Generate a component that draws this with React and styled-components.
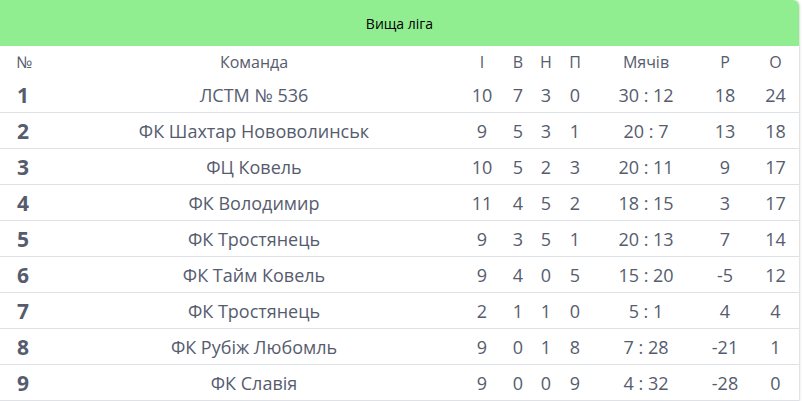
import styled, { createGlobalStyle } from 'styled-components'

const GlobalStyle = createGlobalStyle`
  body {
    margin: 0;
    background: #fff;
    font-family: "Open Sans", "Liberation Sans", sans-serif;
  }
`;

const Card = styled.div`
  width: 799px;
  border-radius: 0 6px 0 0;
  box-shadow: 1px 0 2px rgba(0, 0, 0, 0.15);
  background: #fff;
  overflow: hidden;
`;

const Title = styled.div`
  height: 46px;
  background: #90ee90;
  display: flex;
  align-items: center;
  justify-content: center;
  font-size: 14px;
  font-weight: 500;
  color: #000;
`;

const Table = styled.table`
  width: 799px;
  border-collapse: collapse;
  table-layout: fixed;
  color: #565c6e;
  font-size: 18px;
`;

const HeadCell = styled.th`
  height: 31px;
  padding: 0;
  font-size: 16px;
  font-weight: 400;
  text-align: ${(props) => (props.left ? 'left' : 'center')};
  padding-left: ${(props) => (props.left ? '16px' : '0')};
  vertical-align: middle;
`;

const Row = styled.tr`
  border-bottom: 1px solid #dee2e6;
`;

const Cell = styled.td`
  height: 35px;
  padding: 0;
  text-align: center;
  vertical-align: middle;
  white-space: nowrap;
`;

const RankCell = styled(Cell)`
  text-align: left;
  padding-left: 17px;
  font-size: 21px;
  font-weight: 700;
`;

const widths = [44, 420, 36, 36, 20, 38, 104, 54, 47];

const teams = [
  ['ЛСТМ № 536', 10, 7, 3, 0, '30 : 12', 18, 24],
  ['ФК Шахтар Нововолинськ', 9, 5, 3, 1, '20 : 7', 13, 18],
  ['ФЦ Ковель', 10, 5, 2, 3, '20 : 11', 9, 17],
  ['ФК Володимир', 11, 4, 5, 2, '18 : 15', 3, 17],
  ['ФК Тростянець', 9, 3, 5, 1, '20 : 13', 7, 14],
  ['ФК Тайм Ковель', 9, 4, 0, 5, '15 : 20', -5, 12],
  ['ФК Тростянець', 2, 1, 1, 0, '5 : 1', 4, 4],
  ['ФК Рубіж Любомль', 9, 0, 1, 8, '7 : 28', -21, 1],
  ['ФК Славія', 9, 0, 0, 9, '4 : 32', -28, 0],
];

function App() {
  return (
    <>
      <GlobalStyle />
      <Card>
        <Title>Вища ліга</Title>
        <Table>
          <colgroup>
            {widths.map((w, i) => (
              <col key={i} style={{ width: w }} />
            ))}
          </colgroup>
          <thead>
            <tr>
              <HeadCell left>№</HeadCell>
              <HeadCell>Команда</HeadCell>
              <HeadCell>І</HeadCell>
              <HeadCell>В</HeadCell>
              <HeadCell>Н</HeadCell>
              <HeadCell>П</HeadCell>
              <HeadCell>Мячів</HeadCell>
              <HeadCell>Р</HeadCell>
              <HeadCell>О</HeadCell>
            </tr>
          </thead>
          <tbody>
            {teams.map((t, i) => (
              <Row key={i}>
                <RankCell>{i + 1}</RankCell>
                {t.map((v, j) => (
                  <Cell key={j}>{v}</Cell>
                ))}
              </Row>
            ))}
          </tbody>
        </Table>
      </Card>
    </>
  );
}

export default App;
